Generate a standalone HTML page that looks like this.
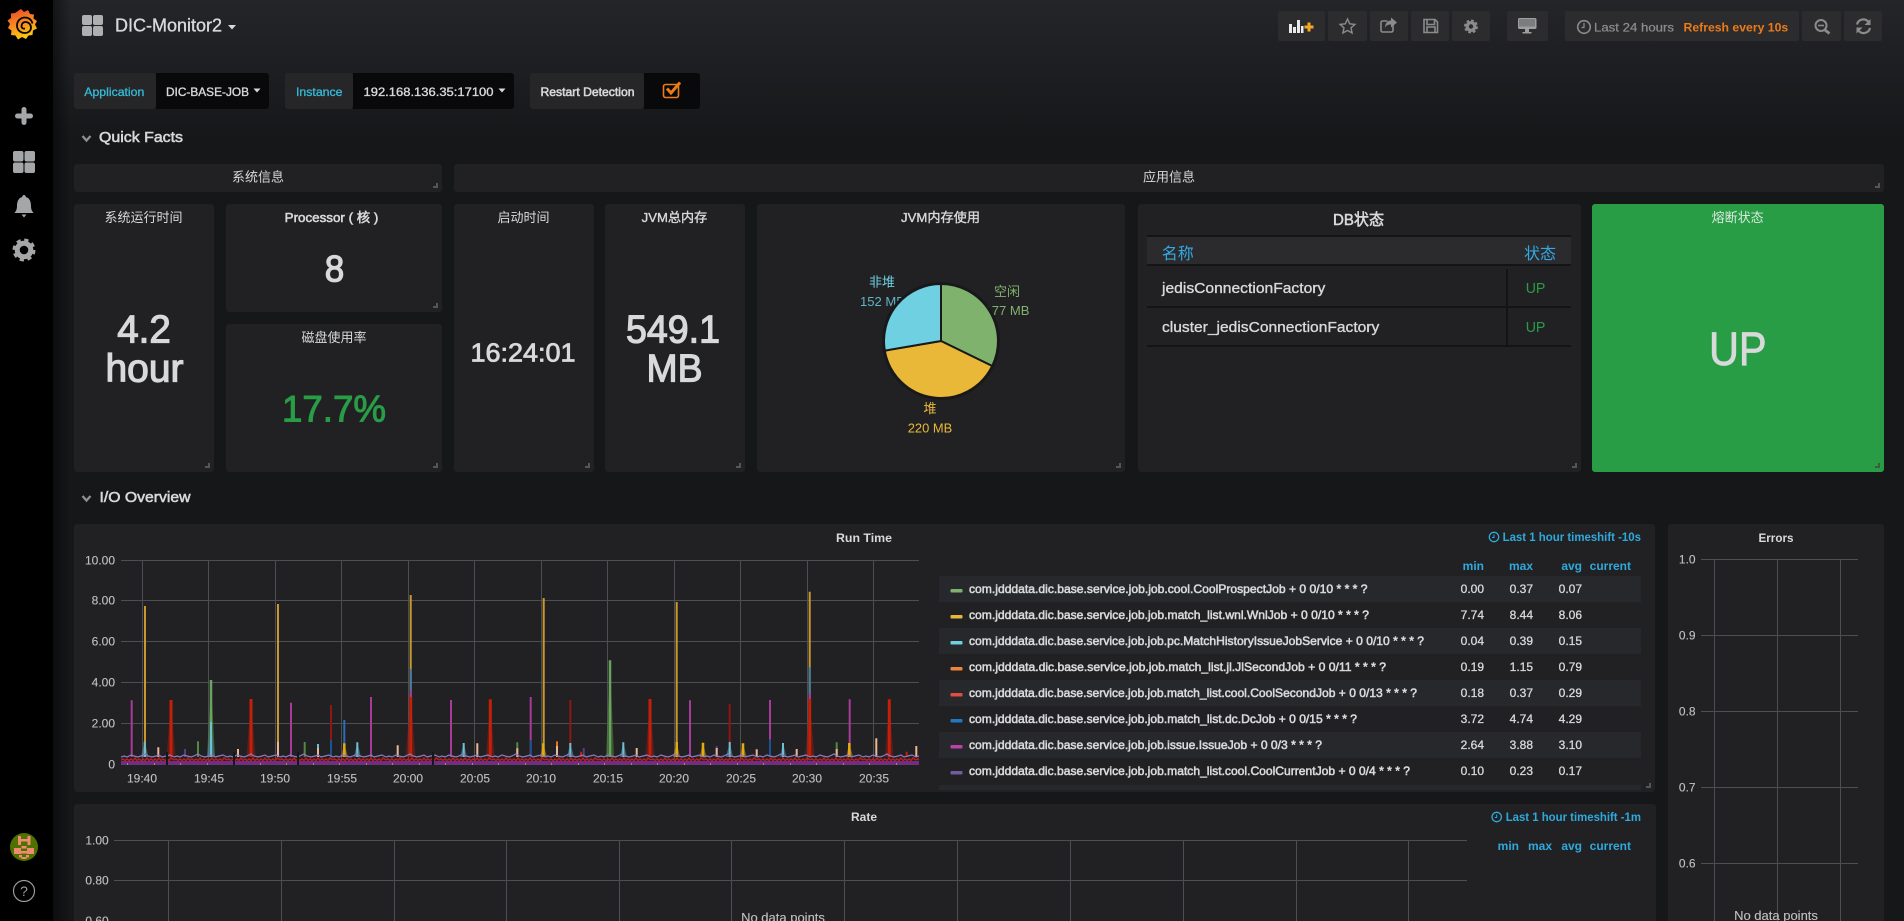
<!DOCTYPE html>
<html lang="zh"><head><meta charset="utf-8"><title>DIC-Monitor2</title>
<style>
*{box-sizing:border-box}
html,body{margin:0;padding:0;width:1904px;height:921px;overflow:hidden;background:#161719}
body{position:relative;font-family:"Liberation Sans","WenQuanYi Zen Hei","Noto Sans CJK SC",sans-serif}
.bg{position:absolute;left:0;top:0;width:1904px;height:140px;background:linear-gradient(#242529,#161719)}
.side{position:absolute;left:0;top:0;width:53px;height:921px;background:#000}
.shade{position:absolute;left:53px;top:0;width:18px;height:921px;background:linear-gradient(90deg,rgba(0,0,0,.45),rgba(0,0,0,0))}
.p{position:absolute;background:#212124;border-radius:3px}
.p i{position:absolute;right:4px;bottom:4px;width:5px;height:5px;border-right:2px solid #55565a;border-bottom:2px solid #55565a}
.btn{position:absolute;top:11px;height:30px;background:#2c2c2f;border-radius:2px}
.tl{position:absolute;top:73px;height:36px;background:#262629;border-radius:3px}
.ts{position:absolute;top:73px;height:36px;background:#09090b;border-radius:0 3px 3px 0}
.row{position:absolute;left:939px;width:702px;height:26px;background:#27282b}
.gr{position:absolute;left:1147px;width:424px;background:#141416}
svg{position:absolute;left:0;top:0}
text{font-family:"Liberation Sans","WenQuanYi Zen Hei","Noto Sans CJK SC",sans-serif;font-size:12px;fill:#d8d9da;white-space:pre}
.b{font-weight:700}
.m{stroke:#d8d9da;stroke-width:.35px}
.s{stroke:#d8d9da;stroke-width:.55px}
.big{stroke-width:1.2px;stroke:#d8d9da}
.ax{fill:#bfc0c1;stroke:#bfc0c1;stroke-width:.12px}
.bl{fill:#2ea9dc;font-weight:700}
.h{fill:#2ea9dc;font-weight:700}
.c{text-anchor:middle}
.e{text-anchor:end}
.v text{stroke:#d8d9da;stroke-width:.3px}
</style></head><body>
<div class="bg"></div>
<div class="side"></div><div class="shade"></div>

<div class="btn" style="left:1278px;width:47px"></div>
<div class="btn" style="left:1328px;width:39px"></div>
<div class="btn" style="left:1370px;width:38px"></div>
<div class="btn" style="left:1411px;width:38px"></div>
<div class="btn" style="left:1452px;width:38px"></div>
<div class="btn" style="left:1507px;width:41px"></div>
<div class="btn" style="left:1565px;width:234px"></div>
<div class="btn" style="left:1802px;width:39px"></div>
<div class="btn" style="left:1844px;width:38px"></div>

<div class="tl" style="left:74px;width:82px"></div><div class="ts" style="left:156px;width:113px"></div>
<div class="tl" style="left:285px;width:68px"></div><div class="ts" style="left:353px;width:161px"></div>
<div class="tl" style="left:530px;width:114px"></div><div class="ts" style="left:644px;width:56px"></div>

<div class="p" style="left:74px;top:164px;width:368px;height:28px"><i></i></div>
<div class="p" style="left:454px;top:164px;width:1430px;height:28px"><i></i></div>
<div class="p" style="left:74px;top:204px;width:140px;height:268px"><i></i></div>
<div class="p" style="left:226px;top:204px;width:216px;height:108px"><i></i></div>
<div class="p" style="left:226px;top:324px;width:216px;height:148px"><i></i></div>
<div class="p" style="left:454px;top:204px;width:140px;height:268px"><i></i></div>
<div class="p" style="left:605px;top:204px;width:140px;height:268px"><i></i></div>
<div class="p" style="left:757px;top:204px;width:368px;height:268px"><i></i></div>
<div class="p" style="left:1138px;top:204px;width:443px;height:268px"><i></i></div>
<div class="p" style="left:1592px;top:204px;width:292px;height:268px;background:#299c46"><i style="border-color:#3d5a45"></i></div>
<div class="p" style="left:74px;top:524px;width:1581px;height:268px"><i></i></div>
<div class="p" style="left:74px;top:804px;width:1582px;height:140px"></div>
<div class="p" style="left:1668px;top:524px;width:216px;height:420px"></div>

<div class="gr" style="top:235px;height:2px"></div>
<div style="position:absolute;left:1147px;top:237px;width:424px;height:27px;background:#2b2b2e"></div>
<div class="gr" style="top:264px;height:2px"></div>
<div class="gr" style="top:306px;height:2px"></div>
<div class="gr" style="top:345px;height:2px"></div>
<div style="position:absolute;left:1506px;top:269px;width:2px;height:76px;background:#141416"></div>

<div class="row" style="top:576px"></div>
<div class="row" style="top:628px"></div>
<div class="row" style="top:680px"></div>
<div class="row" style="top:732px"></div>
<div class="row" style="top:785px;height:5px"></div>

<svg width="1904" height="921" viewBox="0 0 1904 921" xmlns="http://www.w3.org/2000/svg">
<defs>
<linearGradient id="lg" gradientUnits="userSpaceOnUse" x1="16" y1="9" x2="26" y2="39"><stop offset="0" stop-color="#ee4e2a"/><stop offset=".55" stop-color="#f79420"/><stop offset="1" stop-color="#fcd20a"/></linearGradient>
<pattern id="band" patternUnits="userSpaceOnUse" x="121" y="752" width="53" height="13">
<path d="M0 5L3 4 6 5 10 3 13 4 17 5 20 4 24 2 27 4 31 5 35 4 38 3 41 5 45 4 49 3 53 5" fill="none" stroke="#8d78c6" stroke-width="1.200"/>
<path d="M0 8L2 7 4 8.500 6 7 8 8.500 10 7 12 8.500 14 6 16 8.500 18 7 20 8.500 22 7 24 8.500 26 6 28 8.500 30 7 32 8.500 34 7 36 8.500 38 6 40 8.500 42 7 44 8.500 46 7 48 8.500 50 6 53 8" fill="none" stroke="#c41f0c" stroke-width="1.400"/>
<rect y="9" width="53" height="3.500" fill="#77298a"/>
<rect x="6" y="11.500" width="1" height="1" fill="#e7c98a"/><rect x="33" y="11.500" width="1" height="1" fill="#e7c98a"/>
</pattern>
</defs>

<!-- sidebar icons -->
<path d="M21 9l3 3 4-2 2 4 4 .5-.5 4 3.500 2.500-2 3.500 2 4-4 2-.5 4.500-4 .5-2.500 3.500-4-2-4 2.500-2.500-4-4.500-.5.500-4.500L8 28l2-4-2.500-3.500 3.500-2.500V13.500l4-.5z" fill="url(#lg)"/>
<path d="M32.500 23.500C31.500 19.500 28.500 17.500 25 17.500 20.500 17.500 17 21 17 25.500 17 30 20.500 33 25 33 28.500 33 31 30.500 31 27.500 31 24.500 28.500 22 25.500 22 23 22 21.500 24 21.500 26 21.500 28 23 29 25 28.500" fill="none" stroke="#0a0500" stroke-width="1.800"/>
<path d="M24 109.500v13M17.500 116h13" stroke="#a4a6a8" stroke-width="5" stroke-linecap="round" fill="none"/>
<g fill="#a4a6a8"><rect x="13" y="151" width="10.500" height="10.500" rx="2"/><rect x="24.500" y="151" width="10.500" height="10.500" rx="2"/><rect x="13" y="162.500" width="10.500" height="10.500" rx="2"/><rect x="24.500" y="162.500" width="10.500" height="10.500" rx="2"/></g>
<path d="M24 195a1.800 1.800 0 0 1 1.800 2c4 1 5.200 5 5.200 9 0 4 1.500 5.500 2.500 7h-19c1-1.500 2.500-3 2.500-7 0-4 1.200-8 5.200-9A1.800 1.800 0 0 1 24 195z" fill="#a4a6a8"/><path d="M21.500 214.500h5l-2.500 3z" fill="#a4a6a8"/>
<circle cx="24" cy="250" r="6.800" fill="none" stroke="#a4a6a8" stroke-width="5"/><circle cx="24" cy="250" r="10" fill="none" stroke="#a4a6a8" stroke-width="3" stroke-dasharray="4.200 3.650"/>
<circle cx="24" cy="847" r="14" fill="#4f7100"/>
<g fill="#f08a72"><rect x="18" y="836" width="3" height="9"/><rect x="27.500" y="836" width="3" height="9"/><rect x="20" y="839" width="8" height="2.500"/><rect x="21.500" y="846" width="5" height="2.500"/><rect x="14" y="848" width="7" height="6"/><rect x="27" y="848" width="7" height="6"/><rect x="20" y="851" width="8" height="2.500"/><rect x="19" y="855" width="3" height="2.500"/><rect x="26" y="855" width="3" height="2.500"/><rect x="21.500" y="857" width="5" height="2"/></g>
<circle cx="24" cy="891" r="10.500" fill="none" stroke="#9a9b9d" stroke-width="1.200"/>
<text class="c" x="24" y="896" style="font-size:14px;fill:#9a9b9d">?</text>

<!-- nav -->
<g fill="#aeafb0"><rect x="82" y="15" width="10" height="10" rx="2"/><rect x="93" y="15" width="10" height="10" rx="2"/><rect x="82" y="26" width="10" height="10" rx="2"/><rect x="93" y="26" width="10" height="10" rx="2"/></g>
<text class="m" x="115" y="31.500" textLength="107" lengthAdjust="spacingAndGlyphs" style="font-size:18px">DIC-Monitor2</text>
<path d="M228 25h8l-4 4.500z" fill="#d8d9da"/>

<!-- toolbar icons -->
<g fill="#e8e9ea"><rect x="1289" y="24" width="3" height="9"/><rect x="1293" y="27" width="3" height="6"/><rect x="1297" y="20" width="3" height="13"/><rect x="1301" y="26" width="2.500" height="7"/></g>
<path d="M1309 22.500v9M1304.500 27h9" stroke="#f5a623" stroke-width="3"/>
<path d="M1347.500 19l2.200 4.800 5.200.6-3.900 3.500 1.100 5.100-4.600-2.600-4.600 2.600 1.100-5.100-3.900-3.500 5.200-.6z" fill="none" stroke="#8a8b8d" stroke-width="1.400"/>
<path d="M1393 24v6.500a1.500 1.500 0 0 1-1.500 1.500h-9a1.500 1.500 0 0 1-1.500-1.500v-8a1.500 1.500 0 0 1 1.500-1.500h5" fill="none" stroke="#8a8b8d" stroke-width="1.600"/><path d="M1391 17.500l6 5-6 5v-3c-3.500 0-5 1-6 3.500 0-4 2-7.500 6-7.500z" fill="#8a8b8d"/>
<path d="M1424 19.500h11l2.500 2.500v10.500h-13.500zM1427 19.500v5h7.500v-5M1427 32.500v-5.500h8v5.500" fill="none" stroke="#8a8b8d" stroke-width="1.600"/>
<circle cx="1471" cy="26.500" r="3.800" fill="none" stroke="#8a8b8d" stroke-width="3.200"/><circle cx="1471" cy="26.500" r="6" fill="none" stroke="#8a8b8d" stroke-width="2" stroke-dasharray="2.700 2"/>
<path d="M1519.500 18h15.500a1.500 1.500 0 0 1 1.500 1.500v8a1.500 1.500 0 0 1-1.500 1.500h-15.500a1.500 1.500 0 0 1-1.500-1.500v-8a1.500 1.500 0 0 1 1.500-1.500z" fill="#9c9e a0"/><path d="M1519.500 18h15.500a1.500 1.500 0 0 1 1.500 1.500v8a1.500 1.500 0 0 1-1.500 1.500h-15.500a1.500 1.500 0 0 1-1.500-1.500v-8a1.500 1.500 0 0 1 1.500-1.500z" fill="#9c9ea0"/><rect x="1519" y="19" width="16" height="7.500" fill="#7c7d7f"/><rect x="1525" y="29" width="4" height="3" fill="#9c9ea0"/><rect x="1522.500" y="32" width="9" height="1.500" fill="#9c9ea0"/>
<circle cx="1584" cy="27" r="6.300" fill="none" stroke="#8a8b8d" stroke-width="1.600"/><path d="M1584 23v4.500h-2.500" fill="none" stroke="#8a8b8d" stroke-width="1.300"/>
<text x="1594" y="31.500" textLength="80" lengthAdjust="spacingAndGlyphs" style="fill:#8a8b8d;stroke:#8a8b8d;stroke-width:.25px">Last 24 hours</text>
<text x="1683.500" y="31.500" textLength="104.700" lengthAdjust="spacingAndGlyphs" class="b" style="fill:#eb7b18">Refresh every 10s</text>
<circle cx="1821" cy="25.500" r="5.500" fill="none" stroke="#8a8b8d" stroke-width="2"/><path d="M1818 25.500h6" stroke="#8a8b8d" stroke-width="1.600"/><path d="M1825 30l4.500 3.500" stroke="#8a8b8d" stroke-width="2.800"/>
<path d="M1857 24.500a6.500 6.500 0 0 1 11.500-2.500M1870 28a6.500 6.500 0 0 1-11.500 2.500" fill="none" stroke="#8a8b8d" stroke-width="2.200"/><path d="M1870.500 19v6h-6zM1856.500 33.500v-6h6z" fill="#8a8b8d"/>

<!-- template vars -->
<text x="84.300" y="96" textLength="60" lengthAdjust="spacingAndGlyphs" style="fill:#33bcd8;stroke:#33bcd8;stroke-width:.3px">Application</text>
<text class="m" x="166" y="96" textLength="83" lengthAdjust="spacingAndGlyphs">DIC-BASE-JOB</text>
<path d="M253.500 88.500h7l-3.500 4z" fill="#d8d9da"/>
<text x="296" y="96" textLength="46.500" lengthAdjust="spacingAndGlyphs" style="fill:#33bcd8;stroke:#33bcd8;stroke-width:.3px">Instance</text>
<text class="m" x="363.500" y="96" textLength="130" lengthAdjust="spacingAndGlyphs">192.168.136.35:17100</text>
<path d="M498.500 88.500h7l-3.500 4z" fill="#d8d9da"/>
<text x="540.500" y="96" textLength="94" lengthAdjust="spacingAndGlyphs" class="s">Restart Detection</text>
<rect x="663.500" y="84.500" width="15" height="13" rx="2" fill="none" stroke="#eb7b18" stroke-width="1.600"/>
<path d="M667 88.500l4 4.500 9-10.500" fill="none" stroke="#eb7b18" stroke-width="3"/>

<!-- rows -->
<path d="M82.500 136l4 4.500 4-4.500" fill="none" stroke="#8e8f91" stroke-width="2.400"/>
<text x="99" y="142" textLength="84" lengthAdjust="spacingAndGlyphs" class="s" style="font-size:15px">Quick Facts</text>
<path d="M82.500 496l4 4.500 4-4.500" fill="none" stroke="#8e8f91" stroke-width="2.400"/>
<text x="99.500" y="502" textLength="91" lengthAdjust="spacingAndGlyphs" class="s" style="font-size:15px">I/O Overview</text>

<!-- titles -->
<g>
<text class="c" x="258" y="181.500" style="font-size:13px">系统信息</text>
<text class="c" x="1169" y="181.500" style="font-size:13px">应用信息</text>
<text class="c" x="143.500" y="222" style="font-size:13px">系统运行时间</text>
<text class="c s" x="331.500" y="222" textLength="93.700" lengthAdjust="spacingAndGlyphs" style="font-size:13px">Processor ( 核 )</text>
<text class="c" x="334" y="342" style="font-size:13px">磁盘使用率</text>
<text class="c" x="523.500" y="222" style="font-size:13px">启动时间</text>
<text class="c m" x="674.500" y="222" textLength="65.600" lengthAdjust="spacingAndGlyphs" style="font-size:13px">JVM总内存</text>
<text class="c m" x="940.500" y="222" textLength="79" lengthAdjust="spacingAndGlyphs" style="font-size:13px">JVM内存使用</text>
<text class="c s" x="1358.500" y="225" textLength="51" lengthAdjust="spacingAndGlyphs" style="font-size:16px">DB状态</text>
<text class="c" x="1737.600" y="222" style="font-size:13px;fill:#d8eadf">熔断状态</text>
</g>

<!-- big values -->
<text class="c big" x="144" y="342.700" textLength="53.600" lengthAdjust="spacingAndGlyphs" style="font-size:38.600px">4.2</text>
<text class="c big" x="144.500" y="381.700" textLength="78" lengthAdjust="spacingAndGlyphs" style="font-size:38.600px">hour</text>
<text class="c big" x="334.500" y="281.300" textLength="19.500" lengthAdjust="spacingAndGlyphs" style="font-size:37px">8</text>
<text class="c" x="334" y="421.700" textLength="104" lengthAdjust="spacingAndGlyphs" style="font-size:37px;fill:#299c46;stroke:#299c46;stroke-width:1px">17.7%</text>
<text class="c big" x="523" y="361.700" textLength="105" lengthAdjust="spacingAndGlyphs" style="font-size:26px;stroke-width:.8px">16:24:01</text>
<text class="c big" x="673" y="342.700" textLength="94" lengthAdjust="spacingAndGlyphs" style="font-size:38.600px">549.1</text>
<text class="c big" x="674.500" y="381.700" textLength="56" lengthAdjust="spacingAndGlyphs" style="font-size:38.600px">MB</text>
<text class="c big" x="1737.800" y="365" textLength="57.700" lengthAdjust="spacingAndGlyphs" style="font-size:47px;stroke-width:.8px">UP</text>

<!-- pie -->
<g>
<text class="c" x="882" y="286.700" style="font-size:13px;fill:#6ed0e0">非堆</text>
<text class="c" x="882.500" y="306" textLength="45" lengthAdjust="spacingAndGlyphs" style="font-size:13px;fill:#5fb4c4">152 MB</text>
<text class="c" x="1007" y="296" style="font-size:13px;fill:#7eb26d">空闲</text>
<text class="c" x="1007" y="315" textLength="45" lengthAdjust="spacingAndGlyphs" style="font-size:13px;fill:#7eb26d">177 MB</text>
<text class="c" x="930" y="413" style="font-size:13px;fill:#eab839">堆</text>
<text class="c" x="930" y="432.700" textLength="44.500" lengthAdjust="spacingAndGlyphs" style="font-size:13px;fill:#eab839">220 MB</text>
</g>
<circle cx="941" cy="341" r="59" fill="#19191b"/>
<g stroke="#19191b" stroke-width="2" stroke-linejoin="round">
<path d="M941 341L941 284A57 57 0 0 1 992.200 366Z" fill="#7eb26d"/>
<path d="M941 341L992.200 366A57 57 0 0 1 884.800 350.600Z" fill="#eab839"/>
<path d="M941 341L884.800 350.600A57 57 0 0 1 941 284Z" fill="#6ed0e0"/>
</g>

<!-- DB table -->
<text x="1161.700" y="259" style="font-size:16px;fill:#33a9e3">名称</text>
<text x="1524" y="259" style="font-size:16px;fill:#33a9e3">状态</text>
<text class="m" x="1162" y="293" textLength="163.300" lengthAdjust="spacingAndGlyphs" style="font-size:15px">jedisConnectionFactory</text>
<text class="m" x="1162" y="332" textLength="217.300" lengthAdjust="spacingAndGlyphs" style="font-size:15px">cluster_jedisConnectionFactory</text>
<text x="1525.700" y="293" textLength="19.700" lengthAdjust="spacingAndGlyphs" style="font-size:15px;fill:#299c46">UP</text>
<text x="1525.700" y="332" textLength="19.700" lengthAdjust="spacingAndGlyphs" style="font-size:15px;fill:#299c46">UP</text>

<!-- Run Time graph -->
<text class="c b" x="864" y="542" textLength="56" lengthAdjust="spacingAndGlyphs">Run Time</text>
<circle cx="1494" cy="537" r="4.700" fill="none" stroke="#2ea9dc" stroke-width="1.300"/><path d="M1494 534.500v3h-2" fill="none" stroke="#2ea9dc"/>
<text class="bl" x="1502.600" y="541" textLength="138.400" lengthAdjust="spacingAndGlyphs">Last 1 hour timeshift -10s</text>
<path d="M121 560.500H919M121 600.500H919M121 641.500H919M121 682.500H919M121 723.500H919M121 764.500H919M142.500 560V764M208.500 560V764M275.500 560V764M341.500 560V764M408.500 560V764M474.500 560V764M541.500 560V764M607.500 560V764M674.500 560V764M740.500 560V764M807.500 560V764M873.500 560V764" stroke="#4d4e51" fill="none"/>
<g>
<text class="e ax" x="115" y="564.300">10.00</text><text class="e ax" x="115" y="604.500">8.00</text><text class="e ax" x="115" y="645.500">6.00</text><text class="e ax" x="115" y="686.500">4.00</text><text class="e ax" x="115" y="727.500">2.00</text><text class="e ax" x="115" y="768.500">0</text>
<text class="c ax" x="142" y="782.300">19:40</text><text class="c ax" x="209" y="782.300">19:45</text><text class="c ax" x="275" y="782.300">19:50</text><text class="c ax" x="342" y="782.300">19:55</text><text class="c ax" x="408" y="782.300">20:00</text><text class="c ax" x="475" y="782.300">20:05</text><text class="c ax" x="541" y="782.300">20:10</text><text class="c ax" x="608" y="782.300">20:15</text><text class="c ax" x="674" y="782.300">20:20</text><text class="c ax" x="741" y="782.300">20:25</text><text class="c ax" x="807" y="782.300">20:30</text><text class="c ax" x="874" y="782.300">20:35</text>
</g>
<!-- triangular spike bases -->
<g opacity=".55">
<path fill="#8e1a10" d="M166.500 757L171 700 175.500 757zM246.500 757L251 699 255.500 757zM405.500 757L410.700 697 415.500 757zM486 757L490.300 699.300 494.500 757zM645.500 757L650 699 654.500 757zM805 757L809.700 699 814.500 757zM885 757L889.300 699.300 893.500 757z"/>
<path fill="#4f8a3e" d="M207 757L211 680 215 757zM606 757L610 660.300 614 757z"/>
<path fill="#4f9db0" d="M141 757L144.700 741.700 148.500 757zM354 757L357.300 742.300 361 757zM460 757L463.700 743 467 757zM567 757L570.300 743 574 757zM620 757L623.300 742.300 627 757zM726 757L729.700 742 733 757zM780 757L783 743 786.500 757zM207 757L211 722 215 757z"/>
<path fill="#c9992e" d="M341 757L344.300 743.300 348 757zM540 757L543.300 743.300 547 757zM699.500 757L703 742.700 706.500 757zM739.500 757L743 743.300 746.500 757zM846 757L849.300 743 853 757zM673 757L676.700 742 680 757z"/>
</g>
<g fill="none" stroke-width="2">
<path stroke="#c9992e" d="M145 606V757M278 604V757M410.700 595V757M543.700 598V757M676.700 602V757M809.700 591.700V757"/>
<path stroke="#6aa35c" stroke-width="2.500" d="M211 680V757M610 660.300V757"/>
<path stroke="#447ea0" stroke-width="2" d="M410.700 669V757M809.700 667.300V757"/>
<path stroke="#a83a9a" d="M131.700 700.300V757M291 702.700V757M371 697V757M410.700 690V757M451 700V757M530.700 697V757M690 700.300V757M770 700V757M809.700 693.300V757M849.700 699.300V757"/>
<path stroke="#8e1614" d="M331 705V757M570.300 700V757M729.700 704V757"/>
<path stroke="#1a5490" d="M331 740V757M530.700 740V757M770 739.300V757"/>
<path stroke="#2a6fb5" d="M344.300 720V757"/>
<path stroke="#5d3a85" d="M185 749V757M583.700 748V757M716.700 746V757"/>
<path stroke="#4f8a3e" d="M198 741.300V757M304.700 742V757M517.300 742.300V757M836.700 742.300V757"/>
<path stroke="#eab892" d="M158.300 747.300V757M238 749V757M278 741.700V757M318 747.300V757M397.700 745.300V757M477.300 743.300V757M517.300 748.300V757M557 746V757M636.700 748V757M716.700 748V757M756.700 749.300V757M796.700 749V757M836.700 749V757M876.300 738.300V757M916.300 746V757"/>
<path stroke="#e5701e" d="M557 741.300V746"/>
<path stroke="#6ec0d6" d="M144.700 741.700V757M211 722V757M318 744V748M357.300 742.300V757M463.700 743V757M570.300 743V757M623.300 742.300V757M729.700 742V757M783 743V757"/>
<path stroke="#e5ac0e" stroke-width="2.500" d="M344.300 743.300V757M543.300 743.300V757M703 742.700V757M743 743.300V757M849.300 743V757M676.700 742V757"/>
<path stroke="#c41f08" stroke-width="3" d="M171 700V757M251 699V757M410.700 697V757M490.300 699.300V757M650 699V757M809.700 699V757M889.300 699.300V757"/>
<path stroke="#c41f08" d="M581 751.700V757M906.700 751.700V757"/>
</g>
<rect x="121" y="752" width="798" height="13" fill="url(#band)"/>
<g fill="#161719"><rect x="166" y="752" width="2" height="13"/><rect x="233" y="752" width="2" height="13"/><rect x="297" y="752" width="2" height="13"/><rect x="432" y="752" width="2" height="13"/></g>

<!-- Legend -->
<text class="h e" x="1484" y="570">min</text><text class="h e" x="1533" y="570">max</text><text class="h e" x="1582" y="570">avg</text><text class="h e" x="1631" y="570">current</text>
<g>
<rect x="950.500" y="589" width="12" height="3.500" rx="1" fill="#7eb26d"/><rect x="950.500" y="615" width="12" height="3.500" rx="1" fill="#eab839"/><rect x="950.500" y="641" width="12" height="3.500" rx="1" fill="#6ed0e0"/><rect x="950.500" y="667" width="12" height="3.500" rx="1" fill="#ef843c"/><rect x="950.500" y="693" width="12" height="3.500" rx="1" fill="#e24d42"/><rect x="950.500" y="719" width="12" height="3.500" rx="1" fill="#1f78c1"/><rect x="950.500" y="745" width="12" height="3.500" rx="1" fill="#ba43a9"/><rect x="950.500" y="771" width="12" height="3.500" rx="1" fill="#705da0"/>
</g>
<g>
<text class="s" x="969" y="593" textLength="398.500" lengthAdjust="spacingAndGlyphs">com.jdddata.dic.base.service.job.job.cool.CoolProspectJob + 0 0/10 * * * ?</text>
<text class="s" x="969" y="619" textLength="400" lengthAdjust="spacingAndGlyphs">com.jdddata.dic.base.service.job.job.match_list.wnl.WnlJob + 0 0/10 * * * ?</text>
<text class="s" x="969" y="645" textLength="455" lengthAdjust="spacingAndGlyphs">com.jdddata.dic.base.service.job.job.pc.MatchHistoryIssueJobService + 0 0/10 * * * ?</text>
<text class="s" x="969" y="671" textLength="417" lengthAdjust="spacingAndGlyphs">com.jdddata.dic.base.service.job.job.match_list.jl.JlSecondJob + 0 0/11 * * * ?</text>
<text class="s" x="969" y="697" textLength="448" lengthAdjust="spacingAndGlyphs">com.jdddata.dic.base.service.job.job.match_list.cool.CoolSecondJob + 0 0/13 * * * ?</text>
<text class="s" x="969" y="723" textLength="388" lengthAdjust="spacingAndGlyphs">com.jdddata.dic.base.service.job.job.match_list.dc.DcJob + 0 0/15 * * * ?</text>
<text class="s" x="969" y="749" textLength="353" lengthAdjust="spacingAndGlyphs">com.jdddata.dic.base.service.job.job.issue.IssueJob + 0 0/3 * * * ?</text>
<text class="s" x="969" y="775" textLength="441" lengthAdjust="spacingAndGlyphs">com.jdddata.dic.base.service.job.job.match_list.cool.CoolCurrentJob + 0 0/4 * * * ?</text>
</g>
<g class="v">
<text class="e" x="1484" y="593">0.00</text><text class="e" x="1533" y="593">0.37</text><text class="e" x="1582" y="593">0.07</text>
<text class="e" x="1484" y="619">7.74</text><text class="e" x="1533" y="619">8.44</text><text class="e" x="1582" y="619">8.06</text>
<text class="e" x="1484" y="645">0.04</text><text class="e" x="1533" y="645">0.39</text><text class="e" x="1582" y="645">0.15</text>
<text class="e" x="1484" y="671">0.19</text><text class="e" x="1533" y="671">1.15</text><text class="e" x="1582" y="671">0.79</text>
<text class="e" x="1484" y="697">0.18</text><text class="e" x="1533" y="697">0.37</text><text class="e" x="1582" y="697">0.29</text>
<text class="e" x="1484" y="723">3.72</text><text class="e" x="1533" y="723">4.74</text><text class="e" x="1582" y="723">4.29</text>
<text class="e" x="1484" y="749">2.64</text><text class="e" x="1533" y="749">3.88</text><text class="e" x="1582" y="749">3.10</text>
<text class="e" x="1484" y="775">0.10</text><text class="e" x="1533" y="775">0.23</text><text class="e" x="1582" y="775">0.17</text>
</g>

<!-- Rate -->
<text class="c b" x="864" y="821">Rate</text>
<circle cx="1496.700" cy="817" r="4.700" fill="none" stroke="#2ea9dc" stroke-width="1.300"/><path d="M1496.700 814.500v3h-2" fill="none" stroke="#2ea9dc"/>
<text class="bl" x="1505.700" y="821" textLength="135.300" lengthAdjust="spacingAndGlyphs">Last 1 hour timeshift -1m</text>
<text class="h e" x="1519" y="850">min</text><text class="h e" x="1552" y="850">max</text><text class="h e" x="1582" y="850">avg</text><text class="h e" x="1631" y="850">current</text>
<path d="M114 840.500H1467M114 880.500H1467M168.500 840V921M281.500 840V921M394.500 840V921M506.500 840V921M619.500 840V921M731.500 840V921M844.500 840V921M957.500 840V921M1070.500 840V921M1183.500 840V921M1296.500 840V921M1408.500 840V921" stroke="#4d4e51" fill="none"/>
<text class="e ax" x="108.700" y="844.300">1.00</text><text class="e ax" x="108.700" y="884.500">0.80</text><text class="e ax" x="108.700" y="925">0.60</text>
<text class="c ax" x="783" y="922" style="font-size:13px">No data points</text>

<!-- Errors -->
<text class="c b" x="1776" y="542" textLength="35" lengthAdjust="spacingAndGlyphs">Errors</text>
<path d="M1701 559.500H1858M1701 635.500H1858M1701 711.500H1858M1701 787.500H1858M1701 863.500H1858M1714.500 559V921M1777.500 559V921M1840.500 559V921" stroke="#4d4e51" fill="none"/>
<text class="e ax" x="1695.600" y="563.500">1.0</text><text class="e ax" x="1695.600" y="639.500">0.9</text><text class="e ax" x="1695.600" y="715.500">0.8</text><text class="e ax" x="1695.600" y="791.500">0.7</text><text class="e ax" x="1695.600" y="867.500">0.6</text>
<text class="c ax" x="1776" y="920" style="font-size:13px">No data points</text>
</svg>
</body></html>
